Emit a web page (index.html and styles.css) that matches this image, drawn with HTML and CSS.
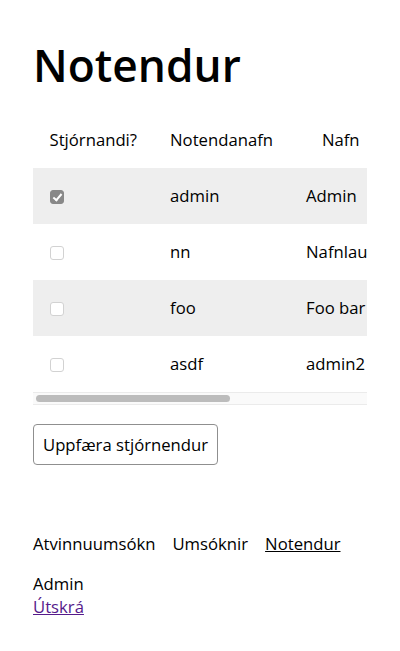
FILE: index.html
```html
<!DOCTYPE html>
<html lang="is">
<head>
<meta charset="utf-8">
<title>Notendur</title>
<link rel="stylesheet" href="styles.css">
</head>
<body>
<main class="page">
  <h1 class="title">Notendur</h1>
  <form class="admin-form">
    <div class="table-wrap">
      <div class="table-scroll">
        <table class="users">
          <thead>
            <tr>
              <th>Stjórnandi?</th>
              <th>Notendanafn</th>
              <th>Nafn</th>
              <th>Netfang</th>
            </tr>
          </thead>
          <tbody>
            <tr>
              <td><input type="checkbox" class="check" checked></td>
              <td>admin</td>
              <td>Admin</td>
              <td>admin@example.org</td>
            </tr>
            <tr>
              <td><input type="checkbox" class="check"></td>
              <td>nn</td>
              <td>Nafnlaus</td>
              <td>nn@example.org</td>
            </tr>
            <tr>
              <td><input type="checkbox" class="check"></td>
              <td>foo</td>
              <td>Foo bar</td>
              <td>foo@example.org</td>
            </tr>
            <tr>
              <td><input type="checkbox" class="check"></td>
              <td>asdf</td>
              <td>admin2</td>
              <td>asdf@example.org</td>
            </tr>
          </tbody>
        </table>
      </div>
      <div class="scroll-track" aria-hidden="true"><div class="scroll-thumb"></div></div>
    </div>
    <button type="button" class="btn">Uppfæra stjórnendur</button>
  </form>
  <nav class="nav">
    <a class="nav-link" href="#">Atvinnuumsókn</a>
    <a class="nav-link" href="#">Umsóknir</a>
    <a class="nav-link active" href="#">Notendur</a>
  </nav>
  <div class="user-box">
    <div class="user-name">Admin</div>
    <a class="logout" href="#">Útskrá</a>
  </div>
</main>
</body>
</html>
```

FILE: styles.css
```css
html, body {
  margin: 0;
  padding: 0;
  background: #fff;
}
body {
  font-family: "Open Sans", "Noto Sans", sans-serif;
  font-size: 16.7px;
  line-height: 24px;
  color: #000;
}
.page {
  padding: 38px 33px 0;
}
.title {
  margin: 0;
  font-size: 44.3px;
  font-weight: 600;
  line-height: 54px;
}
.admin-form {
  margin-top: 20px;
  display: flex;
  flex-direction: column;
  align-items: flex-start;
}
.table-wrap {
  width: 100%;
}
.table-scroll {
  width: 100%;
  overflow: hidden;
}
.scroll-track {
  background: #fafafa;
  border-top: 1px solid #ebebeb;
  border-bottom: 1px solid #ebebeb;
  padding: 2px 3px;
  box-sizing: content-box;
  height: 7px;
}
.scroll-thumb {
  width: 194px;
  height: 7px;
  border-radius: 4px;
  background: #bcbcbc;
}
.users {
  border-collapse: collapse;
  white-space: nowrap;
}
.users th,
.users td {
  padding: 16px 16.5px;
  font-weight: 400;
}
.users td {
  text-align: left;
}
.users th {
  text-align: center;
}
.users tbody tr:nth-child(odd) {
  background: #eee;
}
.check {
  -webkit-appearance: none;
  appearance: none;
  margin: 0 0 0 0.5px;
  width: 14px;
  height: 14px;
  box-sizing: border-box;
  border: 1px solid #d2d2d2;
  border-radius: 3px;
  background: #fff;
  vertical-align: -2px;
  position: relative;
}
.check:checked {
  background: #888;
  border-color: #888;
}
.check:checked::after {
  content: "";
  position: absolute;
  left: 4px;
  top: 1px;
  width: 3px;
  height: 7px;
  border: solid #fff;
  border-width: 0 2px 2px 0;
  transform: rotate(40deg);
}
.btn {
  margin-top: 19px;
  font: inherit;
  color: #000;
  background: #fff;
  border: 1px solid #8f8f8f;
  border-radius: 4px;
  padding: 8px 9px;
  line-height: 23px;
}
.nav {
  margin-top: 67px;
  display: flex;
  gap: 17px;
}
.nav-link {
  color: #000;
  text-decoration: none;
}
.nav-link.active {
  text-decoration: underline;
}
.user-box {
  margin-top: 16px;
  line-height: 23px;
}
.logout {
  color: #551a8b;
}
```
